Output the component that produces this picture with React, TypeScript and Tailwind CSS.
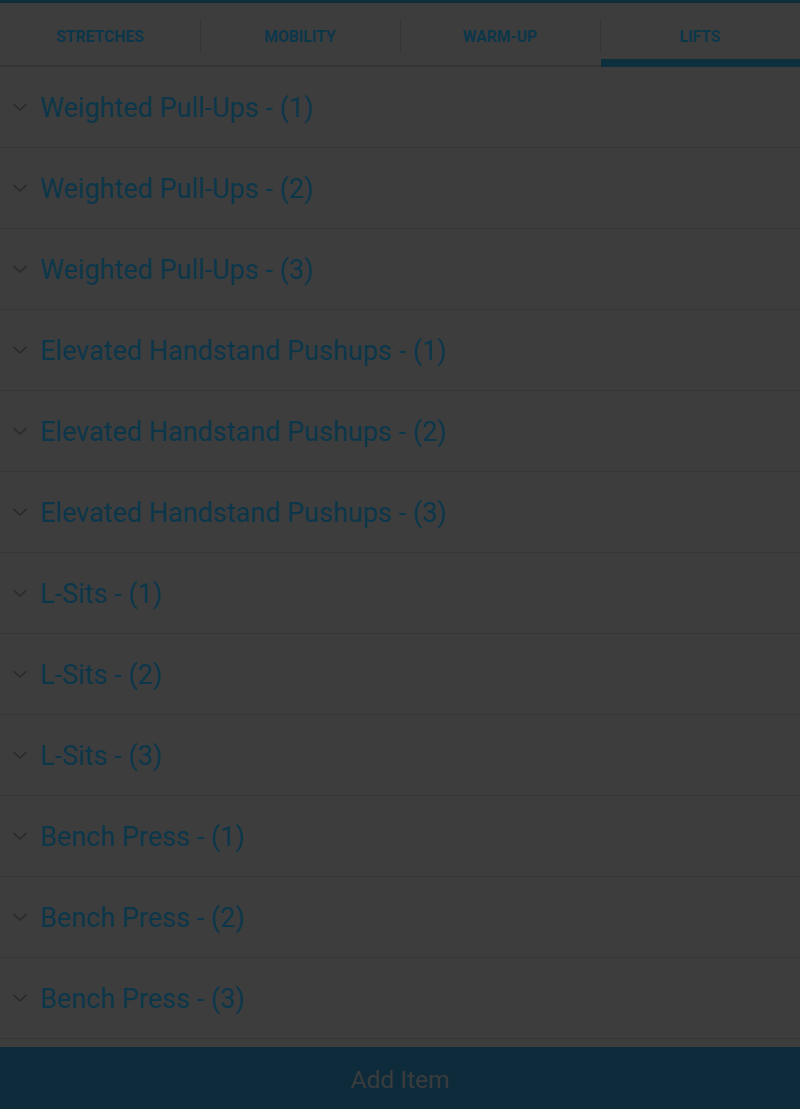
const tabs = ["STRETCHES", "MOBILITY", "WARM-UP", "LIFTS"];

const items = [
  "Weighted Pull-Ups - (1)",
  "Weighted Pull-Ups - (2)",
  "Weighted Pull-Ups - (3)",
  "Elevated Handstand Pushups - (1)",
  "Elevated Handstand Pushups - (2)",
  "Elevated Handstand Pushups - (3)",
  "L-Sits - (1)",
  "L-Sits - (2)",
  "L-Sits - (3)",
  "Bench Press - (1)",
  "Bench Press - (2)",
  "Bench Press - (3)",
];

const Chevron = () => (
  <svg width="16" height="10" viewBox="0 0 16 10" className="ml-[12px] mr-[12px] shrink-0">
    <polyline points="1.5,2 8,8 14.5,2" fill="none" stroke="#2a2a2a" strokeWidth="1.6" />
  </svg>
);

export default function App() {
  return (
    <div
      className="w-[800px] h-[1109px] flex flex-col bg-[#3d3d3d] overflow-hidden"
      style={{ fontFamily: "Roboto, 'Liberation Sans', sans-serif" }}
    >
      {/* Tabs */}
      <div className="border-t-[3px] border-[#0e2d3b] border-b-2 border-b-[#343434] flex h-[67px]">
        {tabs.map((tab, i) => (
          <div key={tab} className="flex-1 relative flex items-center justify-center">
            {i > 0 && <div className="absolute left-0 top-[16px] h-[34px] w-px bg-[#363636]" />}
            <span className="text-[15.7px] font-bold text-[#0c374b] pt-[5px]">{tab}</span>
            {i === 3 && <div className="absolute left-px right-0 bottom-[-2px] h-[8px] bg-[#0d2f3e]" />}
          </div>
        ))}
      </div>

      {/* List */}
      <div className="flex-1 flex flex-col">
        {items.map((item) => (
          <div key={item} className="h-[81px] shrink-0 border-b border-[#363636] flex items-center">
            <Chevron />
            <span className="text-[27px] font-normal text-[#0c374b] leading-none pt-[3px]">{item}</span>
          </div>
        ))}
      </div>

      {/* Add item */}
      <div className="h-[62px] shrink-0 bg-[#0d2b3a] flex items-center justify-center">
        <span className="text-[24.5px] text-[#3a3c3e] pt-[5px]">Add Item</span>
      </div>
    </div>
  );
}
